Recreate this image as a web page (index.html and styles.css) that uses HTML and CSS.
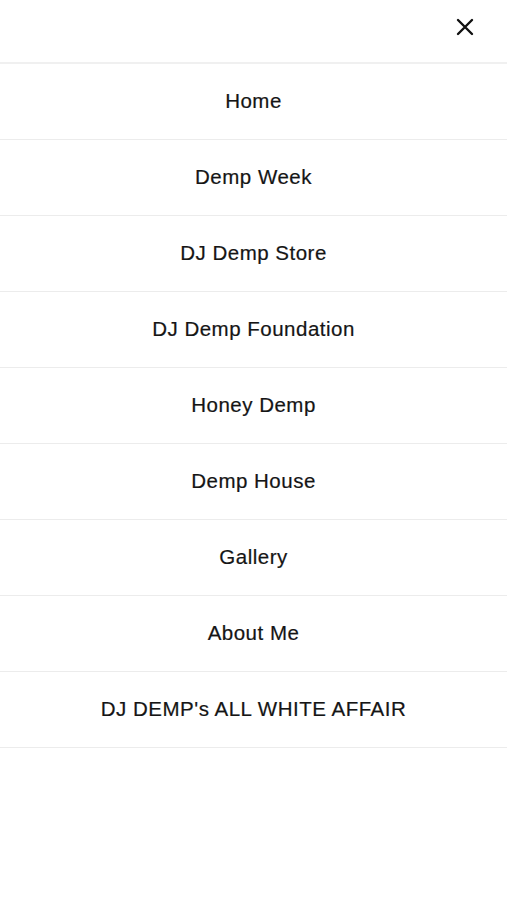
FILE: index.html
```html
<!DOCTYPE html>
<html lang="en">
<head>
    <meta charset="UTF-8">
    <meta name="viewport" content="width=device-width, initial-scale=1.0">
    <title>Menu</title>
    <link rel="stylesheet" href="styles.css">
</head>
<body>
    <div class="menu">
        <!-- top bar with close button -->
        <div class="menu-header">
            <button class="close-btn" aria-label="Close">
                <svg width="18" height="18" viewBox="0 0 18 18">
                    <path d="M2 2 L16 16 M16 2 L2 16" stroke="#111" stroke-width="2.4" stroke-linecap="round"/>
                </svg>
            </button>
        </div>
        <ul class="menu-list">
            <li class="menu-item">Home</li>
            <li class="menu-item">Demp Week</li>
            <li class="menu-item">DJ Demp Store</li>
            <li class="menu-item">DJ Demp Foundation</li>
            <li class="menu-item">Honey Demp</li>
            <li class="menu-item">Demp House</li>
            <li class="menu-item">Gallery</li>
            <li class="menu-item">About Me</li>
            <li class="menu-item">DJ DEMP's ALL WHITE AFFAIR</li>
        </ul>
    </div>
</body>
</html>
```

FILE: styles.css
```css
body {
    font-family: "Liberation Sans", Arial, sans-serif;
    background-color: #ffffff;
    color: #151515;
    margin: 0;
}
.menu {
    width: 100%;
}
.menu-header {
    height: 64px;
    display: flex;
    justify-content: flex-end;
    align-items: center;
    border-bottom: 2px solid #f0f0f0;
    box-sizing: border-box;
    padding-right: 33px;
    padding-bottom: 8px;
}
.close-btn {
    background: none;
    border: none;
    padding: 0;
    display: flex;
    cursor: pointer;
}
.menu-list {
    list-style: none;
    margin: 0;
    padding: 0;
}
.menu-item {
    height: 76px;
    box-sizing: border-box;
    display: flex;
    align-items: center;
    justify-content: center;
    padding-bottom: 2px;
    font-size: 20.5px;
    letter-spacing: 0.5px;
    -webkit-text-stroke: 0.2px #151515;
    border-bottom: 1px solid #ececec;
}
```
